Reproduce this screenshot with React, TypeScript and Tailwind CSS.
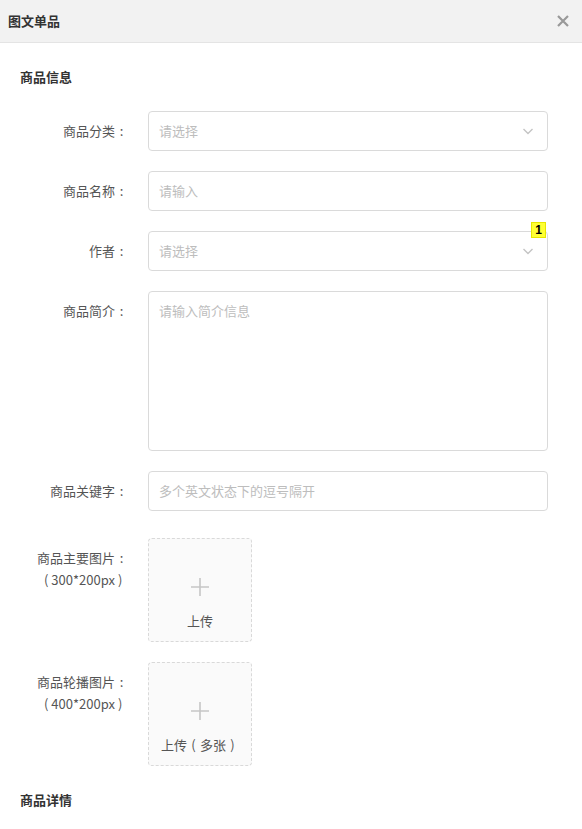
import type { ReactNode } from 'react';

const font = { fontFamily: '"Noto Sans CJK SC", "Noto Sans", sans-serif' };

// full-width punctuation boxes, so colons and brackets keep their em width
const Punct = ({ c, align = 'text-center' }: { c: string; align?: string }) => (
  <span className={`inline-block w-[13px] ${align}`}>{c}</span>
);

function Chevron() {
  return (
    <svg width="14" height="14" viewBox="0 0 14 14" className="text-[#c4c4c4]">
      <path d="M2.5 5l4.5 4.5L11.5 5" fill="none" stroke="currentColor" strokeWidth="1.4" />
    </svg>
  );
}

function Row({ label, children, top = 'items-center' }: { label: ReactNode; children: ReactNode; top?: string }) {
  return (
    <div className={`flex ${top} gap-5`}>
      <div className={`w-[128px] shrink-0 text-right text-[13px] leading-[22px] text-[#555] ${top === 'items-start' ? 'pt-[9px]' : ''}`}>
        {label}
      </div>
      <div className="flex-1 pr-[34px]">{children}</div>
    </div>
  );
}

function Field({ placeholder, select }: { placeholder: string; select?: boolean }) {
  return (
    <div className="flex h-10 items-center justify-between rounded border border-[#dadada] bg-white pl-[10px] pr-[12px] text-[13px] text-[#bdbdbd]">
      <span>{placeholder}</span>
      {select && <Chevron />}
    </div>
  );
}

function Upload({ children }: { children: ReactNode }) {
  return (
    <div className="flex h-[104px] w-[104px] flex-col items-center rounded border border-dashed border-[#d9d9d9] bg-[#fafafa] pt-[38px]">
      <svg width="20" height="20" viewBox="0 0 20 20" className="text-[#c6c6c6]">
        <path d="M10 1v18M1 10h18" stroke="currentColor" strokeWidth="1.6" />
      </svg>
      <span className="mt-[16px] whitespace-nowrap text-[13px] leading-4 text-[#555]">{children}</span>
    </div>
  );
}

const label = (t: string) => (
  <>
    {t}
    <Punct c=":" />
  </>
);

const sizeLabel = (t: string, size: string) => (
  <>
    <div>{label(t)}</div>
    <div>
      <Punct c="(" align="text-right pr-[3px]" />
      {size}
      <Punct c=")" align="text-left pl-[3px]" />
    </div>
  </>
);

export default function App() {
  return (
    <div className="min-h-[829px] w-[582px] bg-white" style={font}>
      <div className="flex h-[43px] items-center justify-between border-b border-[#e4e4e4] bg-[#f2f2f2] pl-2 pr-[13px]">
        <span className="text-[13px] font-bold text-[#333]">图文单品</span>
        <svg width="12" height="12" viewBox="0 0 12 12" className="text-[#999]">
          <path d="M1 1l10 10M11 1L1 11" stroke="currentColor" strokeWidth="2.2" />
        </svg>
      </div>

      <div className="pl-5 pt-[24px] text-[13px] font-bold leading-5 text-[#333]">商品信息</div>

      <div className="mt-[24px] flex flex-col gap-5">
        <Row label={label('商品分类')}>
          <Field placeholder="请选择" select />
        </Row>
        <Row label={label('商品名称')}>
          <Field placeholder="请输入" />
        </Row>
        <Row label={label('作者')}>
          <div className="relative">
            <Field placeholder="请选择" select />
            <span
              className="absolute right-[2px] top-[-9px] flex h-[16px] w-[15px] items-center justify-center border border-[#e6e600] bg-[#ffff33] text-[12px] font-bold leading-none text-black"
              style={{ fontFamily: '"Liberation Sans", sans-serif' }}
            >
              1
            </span>
          </div>
        </Row>
        <Row label={label('商品简介')} top="items-start">
          <div className="h-40 rounded border border-[#dadada] px-[10px] pt-[9px] text-[13px] text-[#bdbdbd]">请输入简介信息</div>
        </Row>
        <Row label={label('商品关键字')}>
          <Field placeholder="多个英文状态下的逗号隔开" />
        </Row>
      </div>

      <div className="mt-[27px] flex flex-col gap-5">
        <Row label={sizeLabel('商品主要图片', '300*200px')} top="items-start">
          <Upload>上传</Upload>
        </Row>
        <Row label={sizeLabel('商品轮播图片', '400*200px')} top="items-start">
          <Upload>
            上传<Punct c="(" />多张<Punct c=")" />
          </Upload>
        </Row>
      </div>

      <div className="pl-5 pt-[24px] text-[13px] font-bold leading-5 text-[#333]">商品详情</div>
    </div>
  );
}
